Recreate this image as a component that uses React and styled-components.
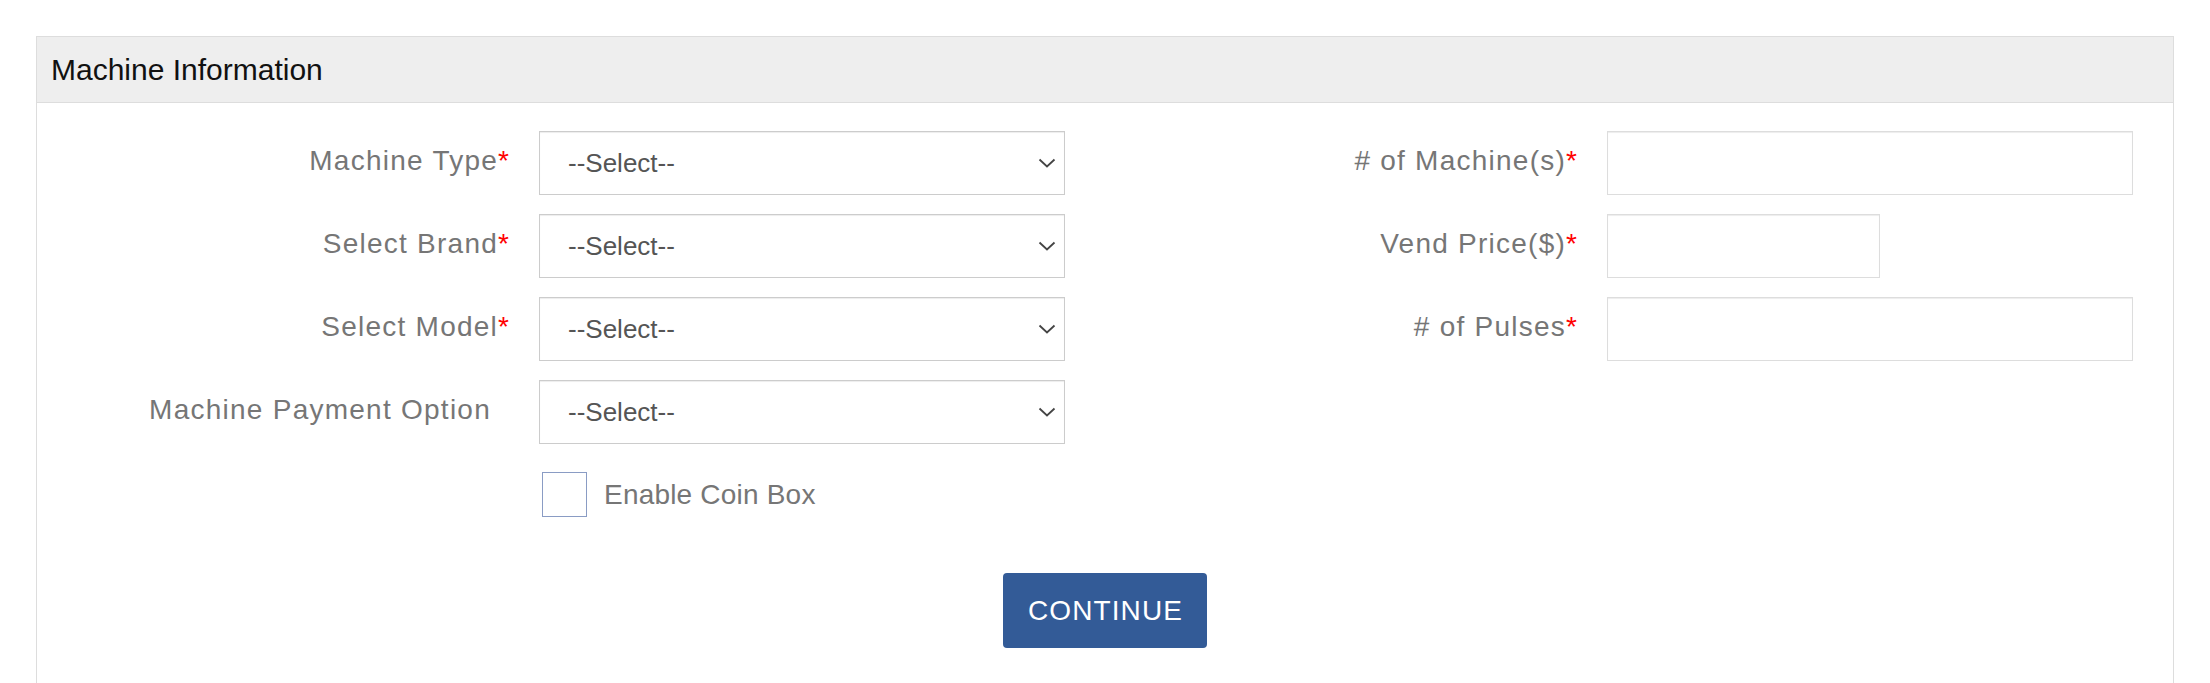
import React from "react";
import styled, { createGlobalStyle } from "styled-components";

const GlobalStyle = createGlobalStyle`
  body {
    margin: 0;
    background: #fff;
    font-family: "Liberation Sans", Arial, sans-serif;
  }
  * {
    box-sizing: border-box;
  }
`;

const Page = styled.div`
  padding: 36px 36px 80px 36px;
`;

const Panel = styled.section`
  border: 1px solid #ddd;
  background: #fff;
`;

const PanelHeading = styled.div`
  display: flex;
  align-items: center;
  height: 66px;
  padding: 0 14px;
  background: #eee;
  border-bottom: 1px solid #ddd;
  color: #111;
  font-size: 30px;
`;

const PanelBody = styled.div`
  padding: 28px 0 40px;
`;

const Columns = styled.div`
  display: grid;
  grid-template-columns: 1fr 1fr;
  align-items: start;
`;

const Column = styled.div`
  display: flex;
  flex-direction: column;
  gap: 19px;
`;

const FormRow = styled.div`
  display: grid;
  grid-template-columns: 502px 526px;
  align-items: start;
`;

const Label = styled.label`
  padding: 10px ${(p) => (p.$trail ? 48 : 30)}px 0 0;
  text-align: right;
  font-size: 28px;
  line-height: 40px;
  letter-spacing: 1.25px;
  color: #767676;
  white-space: nowrap;
`;

const Req = styled.span`
  color: #ff0000;
  letter-spacing: 0;
`;

const SelectWrap = styled.div`
  position: relative;
  height: 64px;
`;

const Select = styled.select`
  width: 100%;
  height: 100%;
  appearance: none;
  border: 1px solid #ccc;
  border-radius: 0;
  box-shadow: inset 0 1px 1px rgba(0, 0, 0, 0.075);
  padding: 0 40px 0 28px;
  background: #fff;
  color: #555;
  font-family: inherit;
  font-size: 26px;
`;

const Chevron = styled.svg`
  position: absolute;
  right: 9px;
  top: 50%;
  transform: translateY(-50%);
  pointer-events: none;
`;

const Input = styled.input`
  width: ${(p) => p.$w}px;
  height: 64px;
  border: 1px solid #ddd;
  border-radius: 0;
  box-shadow: inset 0 1px 1px rgba(0, 0, 0, 0.075);
  padding: 0 16px;
  font-family: inherit;
  font-size: 26px;
  color: #555;
`;

const CheckRow = styled.div`
  display: flex;
  align-items: center;
  gap: 17px;
  margin: 9px 0 0 505px;
`;

const Check = styled.input`
  appearance: none;
  margin: 0;
  width: 45px;
  height: 45px;
  border: 1px solid #8a9cc4;
  background: #fff;
`;

const CheckLabel = styled.span`
  font-size: 28px;
  letter-spacing: 0.2px;
  color: #767676;
`;

const ButtonRow = styled.div`
  display: flex;
  justify-content: center;
  margin-top: 56px;
`;

const Button = styled.button`
  height: 75px;
  padding: 0 24px 0 25px;
  border: none;
  border-radius: 4px;
  background: #335b97;
  color: #fff;
  font-family: inherit;
  font-size: 28px;
  letter-spacing: 1.1px;
`;

const SelectField = ({ label, required, trail }) => (
  <FormRow>
    <Label $trail={trail}>
      {label}
      {required && <Req>*</Req>}
    </Label>
    <SelectWrap>
      <Select defaultValue="">
        <option value="">--Select--</option>
      </Select>
      <Chevron width="18" height="10" viewBox="0 0 18 10">
        <polyline
          points="1.5,1.5 9,8.5 16.5,1.5"
          fill="none"
          stroke="#444"
          strokeWidth="1.8"
        />
      </Chevron>
    </SelectWrap>
  </FormRow>
);

const TextField = ({ label, width }) => (
  <FormRow>
    <Label>
      {label}
      <Req>*</Req>
    </Label>
    <Input type="text" $w={width} />
  </FormRow>
);

const App = () => {
  return (
    <Page>
      <GlobalStyle />
      <Panel>
        <PanelHeading>Machine Information</PanelHeading>
        <PanelBody>
          <Columns>
            <Column>
              <SelectField label="Machine Type" required />
              <SelectField label="Select Brand" required />
              <SelectField label="Select Model" required />
              <SelectField label="Machine Payment Option" trail />
              <CheckRow>
                <Check type="checkbox" />
                <CheckLabel>Enable Coin Box</CheckLabel>
              </CheckRow>
            </Column>
            <Column>
              <TextField label="# of Machine(s)" width={526} />
              <TextField label="Vend Price($)" width={273} />
              <TextField label="# of Pulses" width={526} />
            </Column>
          </Columns>
          <ButtonRow>
            <Button>CONTINUE</Button>
          </ButtonRow>
        </PanelBody>
      </Panel>
    </Page>
  );
};

export default App;
